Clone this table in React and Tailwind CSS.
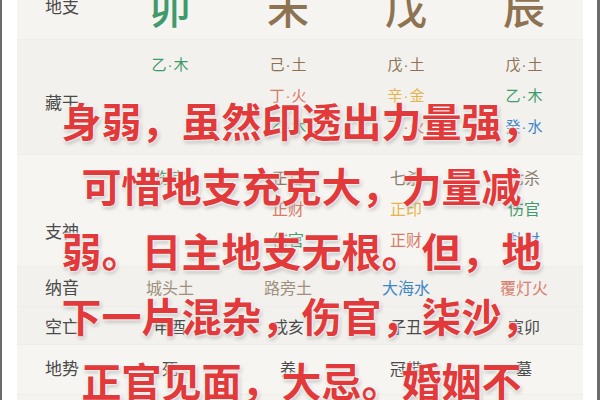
import React from "react";

const GREEN = "text-[#3f9a6c]";
const BROWN = "text-[#8e7352]";
const RED = "text-[#d97a66]";
const GOLD = "text-[#e5b54c]";
const BLUE = "text-[#3d86c6]";
const GRAY = "text-[#8a7d70]";

const zhi = [
  { c: "卯", cls: GREEN },
  { c: "未", cls: BROWN },
  { c: "戊", cls: BROWN },
  { c: "辰", cls: BROWN },
];

const cangGan = [
  [["乙", "木", GREEN]],
  [["己", "土", BROWN], ["丁", "火", RED], ["乙", "木", GREEN]],
  [["戊", "土", BROWN], ["辛", "金", GOLD], ["丁", "火", RED]],
  [["戊", "土", BROWN], ["乙", "木", GREEN], ["癸", "水", BLUE]],
];

const zhiShen = [
  [["伤官", GREEN]],
  [["正官", BROWN], ["正财", RED], ["伤官", GREEN]],
  [["七杀", GRAY], ["正印", GOLD], ["正财", RED]],
  [["七杀", GRAY], ["伤官", GREEN], ["劫财", BLUE]],
];

const naYin = [
  ["城头土", "text-[#a08f7c]"],
  ["路旁土", "text-[#a08f7c]"],
  ["大海水", BLUE],
  ["覆灯火", "text-[#d9806f]"],
];

const kongWang = ["申酉", "戌亥", "子丑", "寅卯"];
const diShi = ["死", "养", "冠带", "墓"];

const lines = [
  "身弱，虽然印透出力量强，",
  "可惜地支充克大，力量减",
  "弱。日主地支无根。但，地",
  "下一片混杂，伤官，柒沙，",
  "正官见面，大忌。婚姻不",
];

function Row({ label, bg, className, children, labelCls = "" }) {
  return (
    <div className={`grid grid-cols-[94px_118px_118px_118px_118px] items-center border-b border-[#eeede8] ${bg} ${className}`}>
      <div className={`pl-[28px] text-[17px] text-[#4a4a4a] ${labelCls}`}>{label}</div>
      {children}
    </div>
  );
}

export default function App() {
  return (
    <div className="relative w-[600px] h-[400px] overflow-hidden bg-white border-l-2 border-r-[3px] border-[#6b6b6b] font-['Noto_Sans_CJK_SC','Noto_Sans',sans-serif]">
      <div className="ml-[15px] w-[566px] h-full bg-[#f4f3ef] flex flex-col">
        <Row label="地支" bg="bg-[#f5f4f0]" className="h-[67px] -mt-[27px] shrink-0">
          {zhi.map((z) => (
            <div key={z.c} className={`text-center text-[42px] leading-none font-medium ${z.cls}`}>{z.c}</div>
          ))}
        </Row>

        <Row label="藏干" bg="bg-[#f2f1ed]" className="h-[115px] shrink-0" labelCls="pt-[10px]">
          {cangGan.map((col, i) => (
            <div key={i} className="flex flex-col items-center self-start pt-[13px] gap-[9px]">
              {col.map(([a, b, cls]) => (
                <div key={a + b} className={`text-[15px] leading-[21px] ${cls}`}>
                  {a}
                  <span className="font-['Liberation_Sans',sans-serif] px-[1px]">·</span>
                  {b}
                </div>
              ))}
            </div>
          ))}
        </Row>

        <Row label="支神" bg="bg-[#f6f5f2]" className="h-[112px] shrink-0" labelCls="pt-[40px]">
          {zhiShen.map((col, i) => (
            <div key={i} className="flex flex-col items-center self-start pt-[12px] gap-[10px]">
              {col.map(([t, cls]) => (
                <div key={t} className={`text-[16px] leading-[21px] ${cls}`}>{t}</div>
              ))}
            </div>
          ))}
        </Row>

        <Row label="纳音" bg="bg-[#f2f1ed]" className="h-[40px] shrink-0">
          {naYin.map(([t, cls]) => (
            <div key={t} className={`text-center text-[16px] ${cls}`}>{t}</div>
          ))}
        </Row>

        <Row label="空亡" bg="bg-[#f2f1ed]" className="h-[38px] shrink-0">
          {kongWang.map((t) => (
            <div key={t} className="text-center text-[16px] text-[#4a4a4a]">{t}</div>
          ))}
        </Row>

        <Row label="地势" bg="bg-[#f6f5f2]" className="h-[50px] shrink-0" labelCls="-mt-[4px]">
          {diShi.map((t) => (
            <div key={t} className="text-center text-[16px] text-[#4a4a4a] -mt-[4px]">{t}</div>
          ))}
        </Row>
      </div>

      <div className="absolute left-0 right-0 top-[88px] pl-[4px] text-center text-[40px] leading-[65px] font-bold text-[#e23a3a] [text-shadow:0_0_2px_#fff,0_0_3px_#fff,0_0_4px_#fff,1px_2px_4px_rgba(0,0,0,0.35)]">
        {lines.map((l) => (
          <div key={l} className="whitespace-nowrap">{l}</div>
        ))}
      </div>
    </div>
  );
}
